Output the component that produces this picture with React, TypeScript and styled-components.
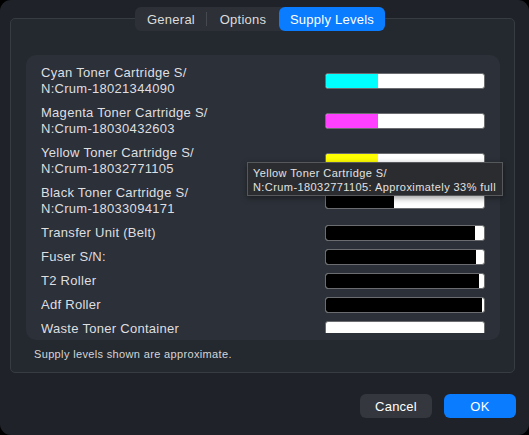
import styled, { createGlobalStyle } from "styled-components";

const GlobalStyle = createGlobalStyle`
  html, body {
    margin: 0;
    padding: 0;
    background: #000;
  }
  body {
    font-family: "Liberation Sans", Arial, sans-serif;
    -webkit-font-smoothing: antialiased;
  }
`;

const Window = styled.div`
  width: 529px;
  height: 435px;
  box-sizing: border-box;
  background: #1f2329;
  border-radius: 11px;
  padding: 7px 13px 17px 10px;
  display: flex;
  flex-direction: column;
  position: relative;
`;

const Body = styled.div`
  position: relative;
  height: 366px;
`;

const GroupBox = styled.div`
  position: absolute;
  inset: 11px 1px 0 0;
  box-sizing: border-box;
  border: 1px solid #373b42;
  border-radius: 5px;
  background: #242930;
  padding: 36px 14px 0 15px;
  display: flex;
  flex-direction: column;
`;

const Segmented = styled.div`
  position: relative;
  z-index: 1;
  margin-left: 125px;
  width: 250px;
  height: 24px;
  display: flex;
  align-items: stretch;
  background: #2d3137;
  border-radius: 6px;
`;

const Segment = styled.div<{ $active?: boolean; $w: number; $divider?: boolean }>`
  width: ${(p) => p.$w}px;
  display: flex;
  align-items: center;
  justify-content: center;
  font-size: 13px;
  letter-spacing: 0.25px;
  color: ${(p) => (p.$active ? "#ffffff" : "#dcdcdc")};
  background: ${(p) => (p.$active ? "#0a7cff" : "transparent")};
  border-radius: 6px;
  position: relative;
  &::after {
    content: "";
    display: ${(p) => (p.$divider ? "block" : "none")};
    position: absolute;
    right: 0;
    top: 5px;
    bottom: 5px;
    width: 1px;
    background: #464a50;
  }
`;

const List = styled.div`
  background: #2c3038;
  border-radius: 10px;
  padding: 0 15px 7px 15px;
`;

const Scroll = styled.div`
  height: 278px;
  overflow: hidden;
  box-sizing: border-box;
  padding-top: 10px;
  display: flex;
  flex-direction: column;
  gap: 8px;
`;

const Row = styled.div`
  display: grid;
  grid-template-columns: 1fr 160px;
  align-items: center;
`;

const Label = styled.div`
  font-size: 13px;
  line-height: 16px;
  letter-spacing: 0.28px;
  color: #dedfe0;
`;

const Bar = styled.div`
  height: 16px;
  box-sizing: border-box;
  background: #ffffff;
  border: 1px solid #6a6c70;
  border-radius: 3px;
  overflow: hidden;
  display: flex;
`;

const Fill = styled.div<{ $color: string }>`
  height: 100%;
  background: ${(p) => p.$color};
`;

const Note = styled.div`
  font-size: 11px;
  letter-spacing: 0.35px;
  color: #d4d5d7;
  padding: 8px 0 0 8px;
`;

const Tooltip = styled.div`
  position: absolute;
  left: 247px;
  top: 162px;
  width: 256px;
  height: 34px;
  box-sizing: border-box;
  padding: 3px 5px;
  background: #2a2c30;
  border: 1px solid #56585c;
  font-size: 11px;
  line-height: 14px;
  letter-spacing: 0.42px;
  color: #e2e2e2;
  box-shadow: 0 2px 6px rgba(0, 0, 0, 0.4);
  white-space: nowrap;
`;

const Footer = styled.div`
  margin-top: auto;
  display: flex;
  justify-content: flex-end;
  gap: 12px;
`;

const Button = styled.button<{ $primary?: boolean }>`
  width: 72px;
  height: 24px;
  border: none;
  border-radius: 6px;
  font-family: inherit;
  font-size: 13px;
  letter-spacing: 0.25px;
  color: #ffffff;
  background: ${(p) => (p.$primary ? "#0a7cff" : "#34373d")};
  padding: 0;
`;

const supplies = [
  { lines: ["Cyan Toner Cartridge S/", "N:Crum-18021344090"], pct: 33, color: "#00ffff" },
  { lines: ["Magenta Toner Cartridge S/", "N:Crum-18030432603"], pct: 33, color: "#ff40ff" },
  { lines: ["Yellow Toner Cartridge S/", "N:Crum-18032771105"], pct: 33, color: "#ffff00" },
  { lines: ["Black Toner Cartridge S/", "N:Crum-18033094171"], pct: 43, color: "#000000" },
  { lines: ["Transfer Unit (Belt)"], pct: 94, color: "#000000" },
  { lines: ["Fuser S/N:"], pct: 95, color: "#000000" },
  { lines: ["T2 Roller"], pct: 97, color: "#000000" },
  { lines: ["Adf Roller"], pct: 98.5, color: "#000000" },
  { lines: ["Waste Toner Container"], pct: 0, color: "#000000" },
];

export default function App() {
  return (
    <>
      <GlobalStyle />
      <Window>
        <Body>
          <GroupBox>
            <List>
              <Scroll>
                {supplies.map((s) => (
                  <Row key={s.lines[0]}>
                    <Label>
                      {s.lines.map((l) => (
                        <div key={l}>{l}</div>
                      ))}
                    </Label>
                    <Bar>
                      <Fill $color={s.color} style={{ width: `${s.pct}%` }} />
                    </Bar>
                  </Row>
                ))}
              </Scroll>
            </List>
            <Note>Supply levels shown are approximate.</Note>
          </GroupBox>
          <Segmented>
            <Segment $w={72} $divider>General</Segment>
            <Segment $w={72}>Options</Segment>
            <Segment $w={106} $active>Supply Levels</Segment>
          </Segmented>
        </Body>
        <Footer>
          <Button>Cancel</Button>
          <Button $primary>OK</Button>
        </Footer>
        <Tooltip>
          Yellow Toner Cartridge S/
          <br />
          N:Crum-18032771105: Approximately 33% full
        </Tooltip>
      </Window>
    </>
  );
}
